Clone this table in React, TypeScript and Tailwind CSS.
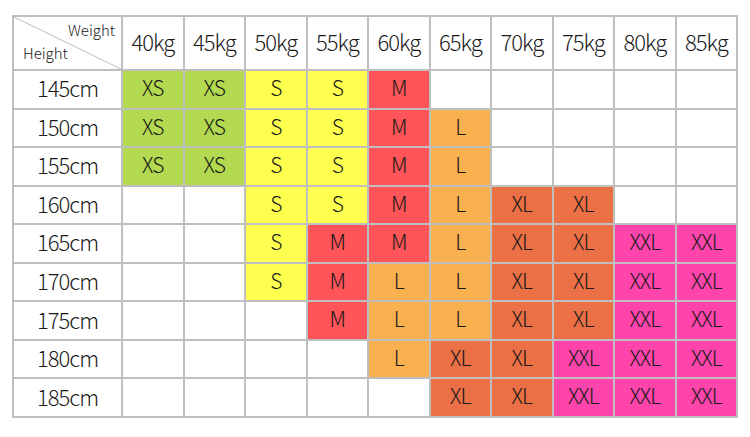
const weights = ["40kg", "45kg", "50kg", "55kg", "60kg", "65kg", "70kg", "75kg", "80kg", "85kg"];

const colors: Record<string, string> = {
  XS: "bg-[#b2d94f]",
  S: "bg-[#ffff4f]",
  M: "bg-[#ff5458]",
  L: "bg-[#f9b14f]",
  XL: "bg-[#ec7045]",
  XXL: "bg-[#ff45ac]",
};

const rows: [string, string[]][] = [
  ["145cm", ["XS", "XS", "S", "S", "M", "", "", "", "", ""]],
  ["150cm", ["XS", "XS", "S", "S", "M", "L", "", "", "", ""]],
  ["155cm", ["XS", "XS", "S", "S", "M", "L", "", "", "", ""]],
  ["160cm", ["", "", "S", "S", "M", "L", "XL", "XL", "", ""]],
  ["165cm", ["", "", "S", "M", "M", "L", "XL", "XL", "XXL", "XXL"]],
  ["170cm", ["", "", "S", "M", "L", "L", "XL", "XL", "XXL", "XXL"]],
  ["175cm", ["", "", "", "M", "L", "L", "XL", "XL", "XXL", "XXL"]],
  ["180cm", ["", "", "", "", "L", "XL", "XL", "XXL", "XXL", "XXL"]],
  ["185cm", ["", "", "", "", "", "XL", "XL", "XXL", "XXL", "XXL"]],
];

export default function App() {
  return (
    <div className="w-[750px] h-[437px] bg-white pl-[12px] pt-[15px] font-['Noto_Sans_CJK_SC','Noto_Sans',sans-serif] font-light text-[#1a1a1a]">
      <div className="w-[726px] h-[403px] grid grid-cols-[107px_repeat(10,1fr)] grid-rows-[52px_repeat(9,1fr)] gap-[2px] p-[2px] bg-[#bfbfbf]">
        {/* corner cell */}
        <div className="relative bg-white">
          <svg className="absolute inset-0" width="107" height="52" viewBox="0 0 107 52">
            <line x1="0" y1="0" x2="107" y2="52" stroke="#bdbdbd" strokeWidth="1" />
          </svg>
          <span className="absolute right-[6px] top-[2px] text-[15px]">Weight</span>
          <span className="absolute left-[9px] bottom-[5px] text-[15px]">Height</span>
        </div>
        {weights.map((w) => (
          <div key={w} className="bg-white flex items-center justify-center pb-[3px] text-[22px] tracking-[-1px]">
            {w}
          </div>
        ))}
        {rows.map(([h, sizes]) => (
          <>
            <div key={h} className="bg-white flex items-center justify-center pb-[3px] text-[22px] tracking-[-1px]">
              {h}
            </div>
            {sizes.map((s, i) => (
              <div
                key={h + i}
                className={`flex items-center justify-center pb-[3px] text-[21px] tracking-[-1px] ${s ? colors[s] : "bg-white"}`}
              >
                {s}
              </div>
            ))}
          </>
        ))}
      </div>
    </div>
  );
}
